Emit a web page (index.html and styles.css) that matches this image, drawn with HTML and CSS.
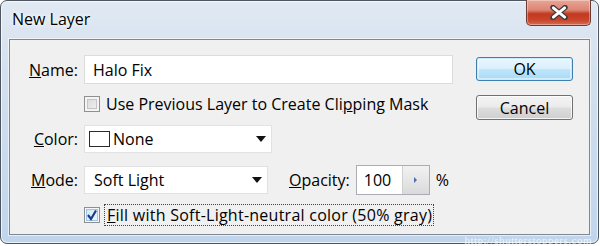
FILE: index.html
```html
<!DOCTYPE html>
<html>
<head>
<meta charset="utf-8">
<link rel="stylesheet" href="styles.css">
</head>
<body>
<div class="window">
  <div class="titlebar">
    <span class="title">New Layer</span>
    <div class="close">
      <svg width="20" height="15" viewBox="0 0 20 15">
        <path d="M4 2.5 L16 12.5 M16 2.5 L4 12.5" stroke="#3a3a3a" stroke-width="5.4" stroke-linecap="round"/>
        <path d="M4.3 2.8 L15.7 12.2 M15.7 2.8 L4.3 12.2" stroke="#ffffff" stroke-width="2.8" stroke-linecap="round"/>
      </svg>
    </div>
  </div>
  <div class="client">
    <div class="form">
      <div class="row row-name">
        <span class="lbl"><u>N</u>ame:</span>
        <div class="textbox">Halo Fix</div>
      </div>
      <div class="row row-check1">
        <span class="checkbox"></span>
        <span class="ctext">Use Previous Layer to Create Cli<u>p</u>ping Mask</span>
      </div>
      <div class="row row-color">
        <span class="lbl"><u>C</u>olor:</span>
        <div class="dropdown dd-color">
          <span class="swatch"></span>
          <span class="ddtext">None</span>
          <span class="arrow"></span>
        </div>
      </div>
      <div class="row row-mode">
        <span class="lbl"><u>M</u>ode:</span>
        <div class="dropdown dd-mode">
          <span class="ddtext mode-text">Soft Light</span>
          <span class="arrow"></span>
        </div>
        <span class="oplbl"><u>O</u>pacity:</span>
        <div class="opbox">
          <span class="opval">100</span>
          <span class="spin"><span class="spin-arrow"></span></span>
        </div>
        <span class="pct">%</span>
      </div>
      <div class="row row-check2">
        <span class="checkbox checked">
          <svg width="12" height="12" viewBox="0 0 12 12"><path d="M2 6 L5 10 L10 1.5" fill="none" stroke="#1c3e86" stroke-width="2.2"/></svg>
        </span>
        <span class="ctext focus"><u>F</u>ill with Soft-Light-neutral color (50% gray)</span>
      </div>
    </div>
    <div class="buttons">
      <div class="btn btn-ok">OK</div>
      <div class="btn btn-cancel">Cancel</div>
    </div>
  </div>
  <div class="watermark">http://shutterstoppers.com</div>
</div>
</body>
</html>
```
FILE: styles.css
```css
html, body {
  margin: 0;
  padding: 0;
  background: #ffffff;
}
body {
  width: 600px;
  height: 246px;
  overflow: hidden;
  font-family: "Open Sans", "Noto Sans", sans-serif;
  font-size: 16px;
  color: #000;
}
.window {
  position: relative;
  box-sizing: border-box;
  width: 599px;
  height: 244px;
  border: 1px solid #4d5560;
  border-radius: 7px;
  background: linear-gradient(180deg, #e1e9f3 0%, #d3e0ee 30%, #c0d5ec 100%);
  box-shadow: inset 0 0 0 1px rgba(255,255,255,0.7);
  padding: 0 8px 8px 8px;
  display: flex;
  flex-direction: column;
}
.titlebar {
  height: 38px;
  display: flex;
  justify-content: space-between;
  align-items: flex-start;
}
.title {
  font-size: 16px;
  margin-left: 3px;
  margin-top: 7px;
  text-shadow: 0 0 6px #fff, 0 0 3px #fff;
}
.close {
  width: 63px;
  height: 25px;
  margin-right: -1px;
  margin-top: -1px;
  border: 1px solid #6a3a36;
  border-top: none;
  border-radius: 0 0 5px 5px;
  background: linear-gradient(180deg, #e9a596 0%, #dc8574 40%, #c23a20 55%, #c8442a 80%, #d46d55 100%);
  box-shadow: inset 0 0 0 1px rgba(255,255,255,0.35);
  display: flex;
  align-items: center;
  justify-content: center;
}
.client {
  flex: 1;
  box-sizing: border-box;
  background: #f0f0f0;
  border: 1px solid #7e8792;
  box-shadow: 0 0 0 1px rgba(255,255,255,0.6);
  display: flex;
}
.form {
  display: flex;
  flex-direction: column;
  padding-top: 15px;
}
.row {
  display: flex;
  align-items: center;
}
.lbl {
  width: 68px;
  text-align: right;
  margin-right: 6px;
}
.textbox {
  box-sizing: border-box;
  width: 369px;
  height: 29px;
  background: #fff;
  border: 1px solid #dcdcdc;
  padding-left: 8px;
  display: flex;
  align-items: center;
}
.row-check1 {
  margin-top: 12px;
  padding-left: 74px;
  height: 16px;
}
.checkbox {
  box-sizing: border-box;
  width: 16px;
  height: 16px;
  border: 1px solid #8e8f8f;
  background: linear-gradient(135deg, #d6d6d6, #f4f4f4);
  box-shadow: inset 0 0 0 2px #f4f4f4, inset 0 0 0 3px #c4c4c4;
  margin-right: 6px;
  display: flex;
  align-items: center;
  justify-content: center;
}
.checkbox.checked {
  background: linear-gradient(135deg, #cfe4f7, #f4f9fe);
  box-shadow: inset 0 0 0 1px #f4f8fc, inset 0 0 0 2px #9ec4e6;
}
.row-color {
  margin-top: 13px;
}
.dropdown {
  box-sizing: border-box;
  height: 28px;
  background: #fff;
  border: 1px solid #e2e2e2;
  display: flex;
  align-items: center;
}
.dd-color {
  width: 188px;
  padding-left: 4px;
}
.dd-mode {
  width: 184px;
  padding-left: 9px;
}
.swatch {
  box-sizing: border-box;
  width: 21px;
  height: 16px;
  border: 1px solid #2b2b2b;
  background: #fff;
  margin-right: 3px;
}
.arrow {
  margin-left: auto;
  margin-right: 5px;
  width: 0;
  height: 0;
  border-left: 5px solid transparent;
  border-right: 5px solid transparent;
  border-top: 6px solid #111;
}
.row-mode {
  margin-top: 12px;
}
.oplbl {
  margin-left: 21px;
  margin-right: 6px;
}
.opbox {
  box-sizing: border-box;
  width: 74px;
  height: 30px;
  border: 1px solid #abadb3;
  background: #fff;
  display: flex;
  align-items: stretch;
}
.opval {
  flex: 1;
  padding-left: 7px;
  display: flex;
  align-items: center;
}
.spin {
  width: 26px;
  border-left: 1px solid #d0d0d0;
  background: linear-gradient(180deg, #f2f2f2, #dadada);
  display: flex;
  align-items: center;
  justify-content: center;
}
.spin-arrow {
  width: 0;
  height: 0;
  border-top: 3px solid transparent;
  border-bottom: 3px solid transparent;
  border-left: 3px solid #4a6fb0;
}
.pct {
  margin-left: 6px;
}
.row-check2 {
  margin-top: 9px;
  padding-left: 74px;
}
.row-check2 .checkbox {
  margin-right: 4px;
}
.focus {
  border: 1px dotted #444;
  padding: 0 1px 0 2px;
  line-height: 20px;
  letter-spacing: 0.25px;
}
.buttons {
  margin-left: auto;
  margin-right: 16px;
  padding-top: 17px;
  display: flex;
  flex-direction: column;
  gap: 14px;
}
.btn {
  box-sizing: border-box;
  width: 97px;
  height: 24px;
  border: 1px solid #707070;
  border-radius: 3px;
  background: linear-gradient(180deg, #f4f4f4 0%, #ebebeb 48%, #dddddd 52%, #cfcfcf 100%);
  box-shadow: inset 0 0 0 1px rgba(255,255,255,0.8);
  display: flex;
  align-items: center;
  justify-content: center;
  font-size: 16px;
}
.btn-ok {
  border-color: #3c7fb1;
  background: linear-gradient(180deg, #eaf6fd 0%, #d9f0fc 48%, #bee6fd 52%, #a7d9f5 100%);
  box-shadow: inset 0 0 0 1px #c6eafe, inset 0 0 0 2px rgba(255,255,255,0.5);
}
.btn-cancel {
  height: 25px;
}
.watermark {
  position: absolute;
  right: 6px;
  bottom: -3px;
  font-family: "Liberation Serif", serif;
  font-size: 11px;
  color: rgba(255,255,255,0.75);
  letter-spacing: 0.5px;
}
```
